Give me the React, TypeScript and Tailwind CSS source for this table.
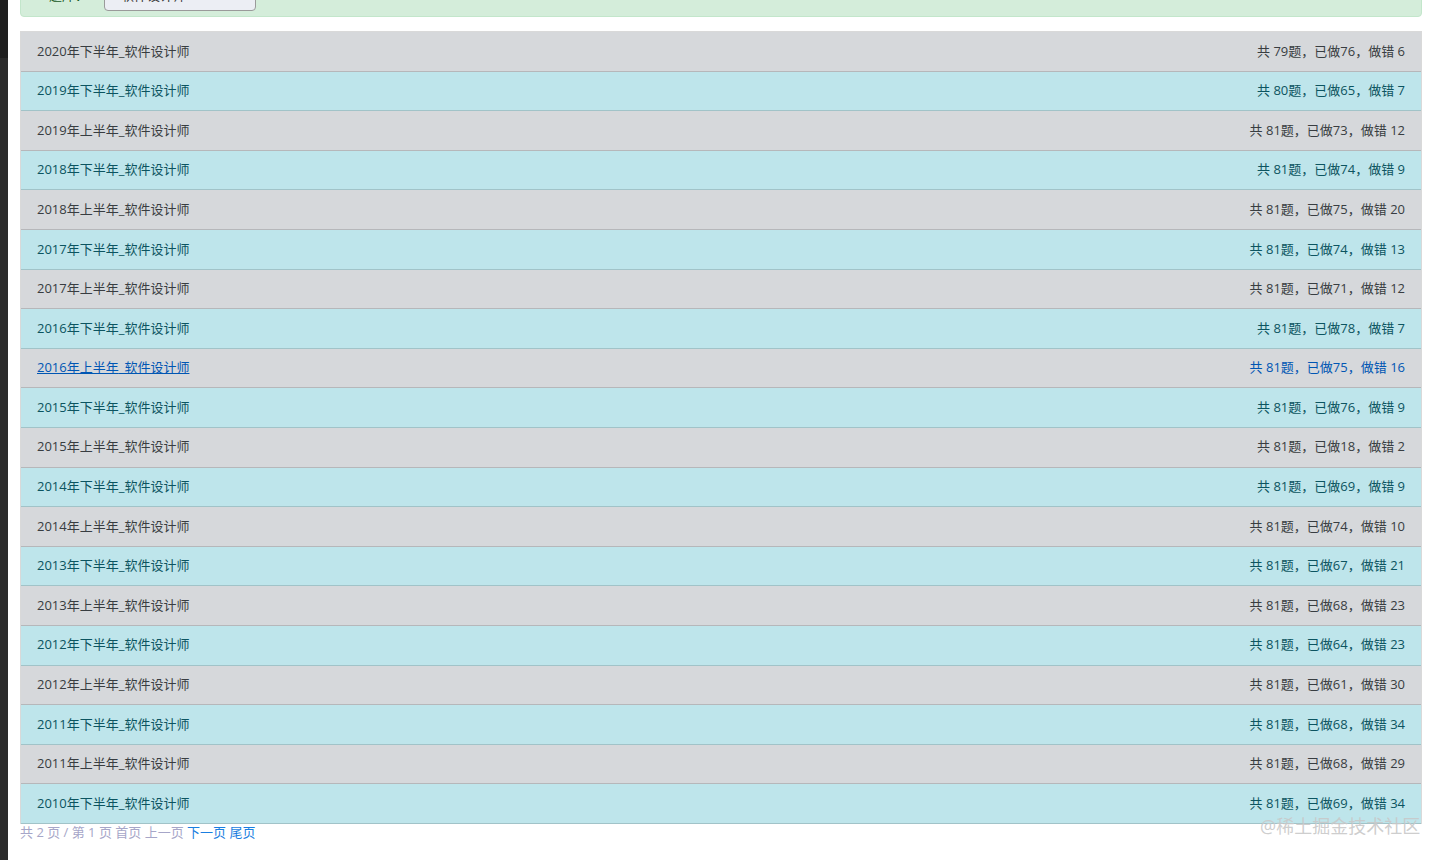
const rows: [string, number, number, number][] = [
  ["2020年下半年", 79, 76, 6],
  ["2019年下半年", 80, 65, 7],
  ["2019年上半年", 81, 73, 12],
  ["2018年下半年", 81, 74, 9],
  ["2018年上半年", 81, 75, 20],
  ["2017年下半年", 81, 74, 13],
  ["2017年上半年", 81, 71, 12],
  ["2016年下半年", 81, 78, 7],
  ["2016年上半年", 81, 75, 16],
  ["2015年下半年", 81, 76, 9],
  ["2015年上半年", 81, 18, 2],
  ["2014年下半年", 81, 69, 9],
  ["2014年上半年", 81, 74, 10],
  ["2013年下半年", 81, 67, 21],
  ["2013年上半年", 81, 68, 23],
  ["2012年下半年", 81, 64, 23],
  ["2012年上半年", 81, 61, 30],
  ["2011年下半年", 81, 68, 34],
  ["2011年上半年", 81, 68, 29],
  ["2010年下半年", 81, 69, 34],
];

export default function App() {
  return (
    <div
      className="relative flex h-[860px] w-[1444px] overflow-hidden bg-white"
      style={{ fontFamily: '"Open Sans", "Noto Sans CJK SC", sans-serif' }}
    >
      {/* left dark strip */}
      <div className="flex w-2 flex-col">
        <div className="h-[58px] bg-[#1f1f1f]" />
        <div className="flex-1 bg-[#2b2b2b]" />
      </div>

      <div className="flex-1 pl-3 pr-[22px]">
        {/* filter panel, mostly scrolled off */}
        <div className="-mt-[26px] flex h-[43px] items-center gap-4 rounded border border-[#c3e6cb] bg-[#d4edda] pl-7 text-[13px] text-[#155724]">
          <span>题库：</span>
          <div className="flex h-[30px] w-[152px] items-center rounded border border-[#9a9a9a] bg-[#eceef4] px-4 text-[#333]">
            软件设计师
          </div>
        </div>

        {/* list */}
        <div className="mt-[14px] border-x border-t border-black/15 text-[13px]">
          {rows.map(([name, total, done, wrong], i) => {
            const info = i % 2 === 1;
            const hover = i === 8;
            const color = hover ? "text-[#0056b3]" : info ? "text-[#0c5460]" : "text-[#383d41]";
            return (
              <div
                key={name}
                className={`flex h-[39.6px] items-center justify-between border-b border-black/15 pl-4 pr-4 ${
                  info ? "bg-[#bee5eb]" : "bg-[#d6d8db]"
                } ${color}`}
              >
                <span className={hover ? "underline" : ""}>{name}_软件设计师</span>
                <span>
                  共 {total}题，已做{done}，做错 {wrong}
                </span>
              </div>
            );
          })}
        </div>

        {/* pagination */}
        <div className="text-[13px] leading-[17px] text-[#a6a6c8]">
          共 2 页 / 第 1 页 首页 上一页 <span className="text-[#1a7ee0]">下一页</span>{" "}
          <span className="text-[#1a7ee0]">尾页</span>
        </div>
      </div>

      {/* watermark */}
      <div className="absolute left-[1260px] top-[814px] text-[18px] leading-[24px] text-[#c8c8c8]/90">
        @稀土掘金技术社区
      </div>
    </div>
  );
}
